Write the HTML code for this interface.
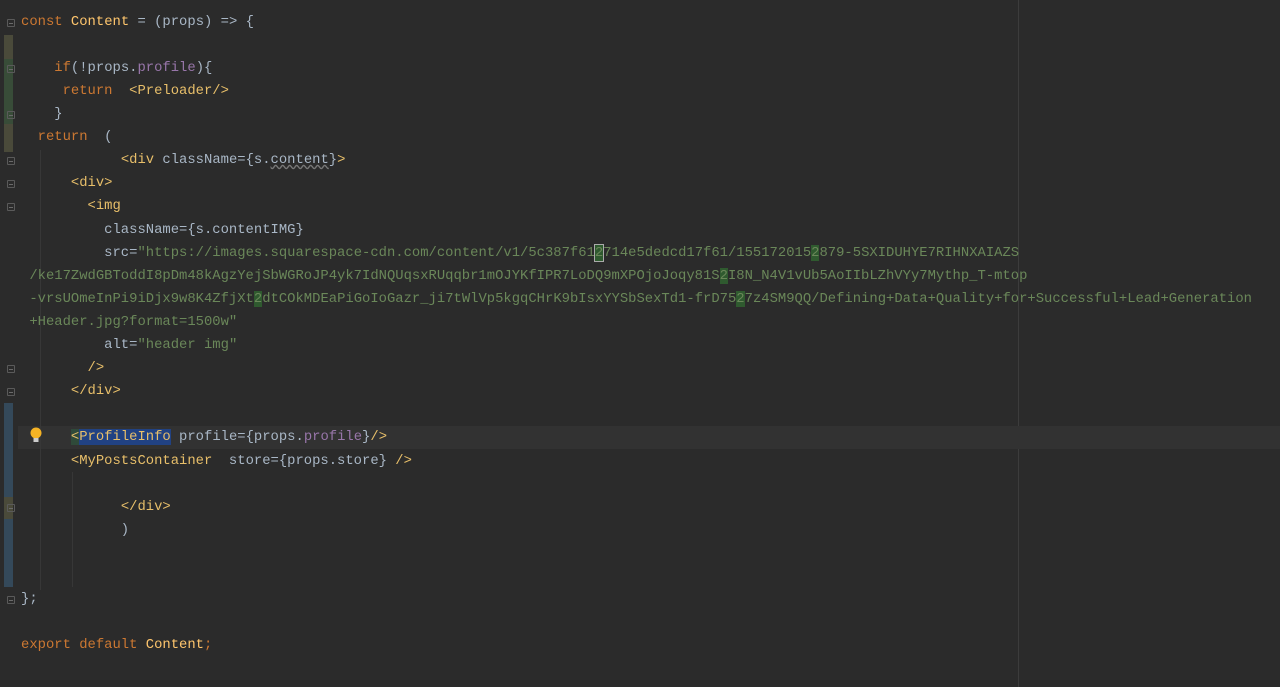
<!DOCTYPE html><html><head><style>
body{margin:0;width:1280px;height:687px;background:#2b2b2b;overflow:hidden;position:relative;font-family:"Liberation Mono",monospace;font-size:13.86px}
.l{position:absolute;left:21px;white-space:pre;color:#a9b7c6;line-height:23px;height:23px}
.k{color:#cc7832}.f{color:#ffc66d}.t{color:#e8bf6a}.s{color:#6a8759}.p{color:#9876aa}
.m{position:absolute;left:4px;width:9px}
.g{background:#2f5a2f}
.fd{position:absolute;left:7px;width:8px;height:8px;border:1px solid #5a5a5a;box-sizing:border-box;border-radius:1px}
.fd:after{content:"";position:absolute;left:1px;right:1px;top:3px;height:1px;background:#6a6a6a}
</style></head><body>
<div style="position:absolute;left:1018px;top:0;width:1px;height:687px;background:#3c3c3c"></div>
<div style="position:absolute;left:18px;top:426px;width:1262px;height:23px;background:#323232"></div>
<div class="m" style="top:35px;height:24px;background:#4a4a3a"></div>
<div class="m" style="top:59px;height:65px;background:#384c38"></div>
<div class="m" style="top:124px;height:28px;background:#4a4a3a"></div>
<div class="m" style="top:403px;height:184px;background:#34495a"></div>
<div class="m" style="top:497px;height:22px;background:#4a4a3a"></div>
<div class="fd" style="top:19px"></div>
<div class="fd" style="top:65px"></div>
<div class="fd" style="top:111px"></div>
<div class="fd" style="top:157px"></div>
<div class="fd" style="top:180px"></div>
<div class="fd" style="top:203px"></div>
<div class="fd" style="top:365px"></div>
<div class="fd" style="top:388px"></div>
<div class="fd" style="top:504px"></div>
<div class="fd" style="top:596px"></div>
<div style="position:absolute;left:40px;top:150px;width:1px;height:440px;background:#373737"></div>
<div style="position:absolute;left:72px;top:472px;width:1px;height:115px;background:#373737"></div>
<svg style="position:absolute;left:29px;top:426px" width="14" height="18"><circle cx="7" cy="7" r="5.5" fill="#f5b325"/><rect x="4.5" y="12" width="5" height="4" fill="#ccc"/></svg>
<div class="l" style="top:11px"><span class="k">const</span> <span class="f">Content</span> = (props) =&gt; {</div>
<div class="l" style="top:57px">    <span class="k">if</span>(!props.<span class="p">profile</span>){</div>
<div class="l" style="top:80px">     <span class="k">return</span>  <span class="t">&lt;Preloader/&gt;</span></div>
<div class="l" style="top:103px">    }</div>
<div class="l" style="top:126px">  <span class="k">return</span>  (</div>
<div class="l" style="top:149px">            <span class="t">&lt;div</span> className=<span>{s.<span style="text-decoration:underline wavy #777">content</span>}</span><span class="t">&gt;</span></div>
<div class="l" style="top:172px">      <span class="t">&lt;div&gt;</span></div>
<div class="l" style="top:195px">        <span class="t">&lt;img</span></div>
<div class="l" style="top:219px">          className={s.contentIMG}</div>
<div class="l" style="top:242px">          src=<span class="s">"https://images.squarespace-cdn.com/content/v1/5c387f61<span style="outline:1px solid #aaa;background:#2f5a2f">2</span>714e5dedcd17f61/155172015<span class="g">2</span>879-5SXIDUHYE7RIHNXAIAZS</span></div>
<div class="l s" style="top:265px"> /ke17ZwdGBToddI8pDm48kAgzYejSbWGRoJP4yk7IdNQUqsxRUqqbr1mOJYKfIPR7LoDQ9mXPOjoJoqy81S<span class="g">2</span>I8N_N4V1vUb5AoIIbLZhVYy7Mythp_T-mtop</div>
<div class="l s" style="top:288px"> -vrsUOmeInPi9iDjx9w8K4ZfjXt<span class="g">2</span>dtCOkMDEaPiGoIoGazr_ji7tWlVp5kgqCHrK9bIsxYYSbSexTd1-frD75<span class="g">2</span>7z4SM9QQ/Defining+Data+Quality+for+Successful+Lead+Generation</div>
<div class="l s" style="top:311px"> +Header.jpg?format=1500w"</div>
<div class="l" style="top:334px">          alt=<span class="s">"header img"</span></div>
<div class="l" style="top:357px">        <span class="t">/&gt;</span></div>
<div class="l" style="top:380px">      <span class="t">&lt;/div&gt;</span></div>
<div class="l" style="top:426px">      <span class="t"><span style="background:#2f4a3a">&lt;</span><span style="background:#214283">ProfileInfo</span></span> profile={props.<span class="p">profile</span>}<span class="t">/&gt;</span></div>
<div class="l" style="top:450px">      <span class="t">&lt;MyPostsContainer</span>  store={props.store} <span class="t">/&gt;</span></div>
<div class="l" style="top:496px">            <span class="t">&lt;/div&gt;</span></div>
<div class="l" style="top:519px">            )</div>
<div class="l" style="top:588px">};</div>
<div class="l" style="top:634px"><span class="k">export default</span> <span class="f">Content</span><span class="k">;</span></div>
</body></html>
